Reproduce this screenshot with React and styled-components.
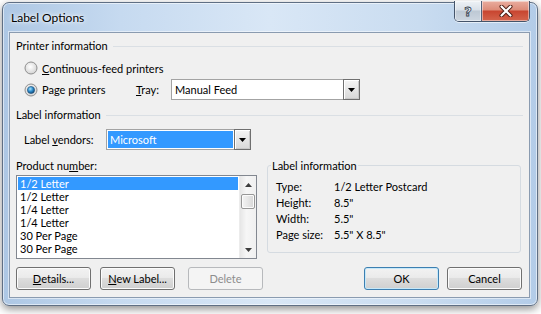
import React from 'react'
import styled, { createGlobalStyle, css } from 'styled-components'

const GlobalStyle = createGlobalStyle`
  html, body {
    margin: 0;
    padding: 0;
    background: #ffffff;
  }
  body {
    font-family: Lato, "Segoe UI", "Noto Sans", sans-serif;
    font-size: 11px;
    color: #000;
  }
  #root {
    width: 541px;
    height: 314px;
    overflow: hidden;
  }
`

const Window = styled.div`
  box-sizing: border-box;
  width: 536px;
  height: 304px;
  margin: 2px 0 0 2px;
  border: 1px solid #5f6f84;
  border-radius: 7px;
  background: linear-gradient(90deg, #adc7e4 0%, #c6daf0 22%, #d9e7f6 50%, #c9dcf0 78%, #b3cce8 100%);
  box-shadow: 0 3px 8px rgba(0, 0, 0, 0.45), inset 0 0 0 1px rgba(255, 255, 255, 0.55);
  padding: 0 7px 7px 6px;
  display: flex;
  flex-direction: column;
`

const TitleBar = styled.div`
  height: 29px;
  display: flex;
  align-items: flex-start;
`

const Title = styled.div`
  flex: 1;
  font-size: 12px;
  line-height: 29px;
  padding-left: 2px;
  text-shadow: 0 0 6px #fff, 0 0 3px #fff;
`

const CaptionButtons = styled.div`
  display: flex;
  margin-top: -2px;
  height: 20px;
  border: 1px solid #44546a;
  border-top: none;
  border-radius: 0 0 5px 5px;
  overflow: hidden;
  box-shadow: 0 1px 0 rgba(255, 255, 255, 0.6);
`

const CaptionButton = styled.div`
  width: ${p => p.$w}px;
  display: flex;
  align-items: center;
  justify-content: center;
  box-shadow: inset 0 0 0 1px rgba(255, 255, 255, 0.45);
  ${p => p.$close
    ? css`background: linear-gradient(#e9ad9f 0%, #dd8b78 45%, #c84530 50%, #d4654d 100%);`
    : css`
        background: linear-gradient(#eef2f6 0%, #d9e0e8 45%, #bdc8d4 50%, #cdd6e0 100%);
        border-right: 1px solid #52627a;
      `}
`

const HelpGlyph = styled.span`
  font-family: "DejaVu Sans", sans-serif;
  font-size: 13px;
  font-weight: bold;
  color: #f4f6f8;
  -webkit-text-stroke: 0.8px #2f3b4b;
  line-height: 1;
`

const Client = styled.div`
  flex: 1;
  box-sizing: border-box;
  background: #f0f0f0;
  border: 1px solid #8a9bb0;
  box-shadow: 0 0 0 1px rgba(255, 255, 255, 0.5);
  padding: 0 6px 0 6px;
  display: flex;
  flex-direction: column;
`

const SectionHeader = styled.div`
  display: flex;
  align-items: center;
  gap: 5px;
  height: 16px;
  line-height: 16px;
  margin-top: ${p => p.$top}px;
  &::after {
    content: '';
    flex: 1;
    height: 1px;
    background: #dadfe4;
  }
`

const Row = styled.div`
  display: flex;
  align-items: center;
  height: ${p => p.$h}px;
  margin-top: ${p => p.$top}px;
  padding-left: 8px;
`

const RadioLabel = styled.label`
  display: flex;
  align-items: center;
  gap: 4px;
  width: ${p => (p.$w ? `${p.$w}px` : 'auto')};
`

const FieldLabel = styled.span`
  width: ${p => p.$w}px;
  flex-shrink: 0;
`

const Key = styled.span`
  text-decoration: underline;
  text-underline-offset: 1px;
`

const Combo = styled.div`
  box-sizing: border-box;
  width: ${p => p.$w}px;
  height: 21px;
  display: flex;
  border: 1px solid #a3a3a3;
  background: #fff;
`

const ComboText = styled.div`
  flex: 1;
  margin: 1px;
  padding-left: 2px;
  line-height: 17px;
  ${p => p.$selected && css`
    background: #3399ff;
    color: #fff;
  `}
`

const ComboArrow = styled.div`
  box-sizing: border-box;
  width: 17px;
  margin: -1px -1px -1px 0;
  border: 1px solid #6f6f6f;
  box-shadow: inset 1px 1px 0 #ffffff, inset -1px -1px 0 #c8c8c8;
  background: linear-gradient(#f4f4f4, #d8d8d8);
  display: flex;
  align-items: center;
  justify-content: center;
`

const BottomArea = styled.div`
  display: grid;
  grid-template-columns: 241px 1fr;
  column-gap: 10px;
  margin-top: 8px;
  padding-right: 2px;
  align-items: start;
`

const ListLabel = styled.div`
  height: 15px;
  line-height: 15px;
`

const ListBox = styled.div`
  box-sizing: border-box;
  height: 84px;
  margin-top: 2px;
  border: 1px solid #828790;
  background: #fff;
  display: flex;
`

const Items = styled.div`
  flex: 1;
  padding: 1px 1px 0 1px;
  overflow: hidden;
`

const Item = styled.div`
  height: 13px;
  line-height: 13px;
  padding-left: 2px;
  white-space: nowrap;
  ${p => p.$selected && css`
    background: #3399ff;
    color: #fff;
  `}
`

const ScrollBar = styled.div`
  width: 16px;
  display: flex;
  flex-direction: column;
  background: linear-gradient(90deg, #e6e6e6, #f6f6f6 40%, #f0f0f0);
  border-left: 1px solid #ececec;
`

const ScrollArrow = styled.div`
  height: 17px;
  display: flex;
  align-items: center;
  justify-content: center;
`

const Track = styled.div`
  flex: 1;
  padding: 1px 1px 0 1px;
`

const Thumb = styled.div`
  box-sizing: border-box;
  height: 15px;
  border: 1px solid #979797;
  border-radius: 2px;
  background: linear-gradient(90deg, #f4f4f4, #e6e6e6 50%, #d6d6d6);
  box-shadow: inset 0 0 0 1px #fbfbfb;
`

const GroupBox = styled.fieldset`
  margin: 0;
  min-width: 0;
  border: 1px solid #d5dbe1;
  border-radius: 3px;
  padding: 5px 3px 10px 3px;
`

const Legend = styled.legend`
  padding: 0 1px;
  line-height: 15px;
`

const InfoGrid = styled.div`
  display: grid;
  grid-template-columns: 58px 1fr;
  grid-auto-rows: 16px;
  align-items: center;
  padding-left: 5px;
`

const ButtonRow = styled.div`
  display: flex;
  margin-top: 8px;
  padding-right: 1px;
`

const Button = styled.button`
  box-sizing: border-box;
  width: 75px;
  height: 23px;
  margin-left: ${p => p.$gap || 0}px;
  padding: 0;
  font: inherit;
  color: #000;
  border: 1px solid #707070;
  border-radius: 3px;
  background: linear-gradient(#f2f2f2 0%, #ebebeb 45%, #dddddd 50%, #cfcfcf 100%);
  box-shadow: inset 0 0 0 1px #fcfcfc;
  ${p => p.$default && css`
    border-color: #3c7fb1;
    box-shadow: inset 0 0 0 1px #c6e8f9;
  `}
  &:disabled {
    color: #8d8d8d;
    border-color: #b7b9bc;
    background: #f4f4f4;
    box-shadow: none;
  }
`

const Spacer = styled.div`
  flex: 1;
`

const Radio = ({ checked }) => (
  <svg width='14' height='14' viewBox='0 0 14 14'>
    <defs>
      <radialGradient id='rf' cx='45%' cy='40%' r='60%'>
        <stop offset='0%' stopColor='#ffffff' />
        <stop offset='100%' stopColor='#d3d3d3' />
      </radialGradient>
      <radialGradient id='rd' cx='40%' cy='35%' r='65%'>
        <stop offset='0%' stopColor='#a8e3fb' />
        <stop offset='55%' stopColor='#2d8bcb' />
        <stop offset='100%' stopColor='#144a78' />
      </radialGradient>
    </defs>
    <circle cx='7' cy='7' r='6' fill='url(#rf)' stroke='#8f8f8f' strokeWidth='1' />
    {checked && <circle cx='7' cy='7' r='3.6' fill='url(#rd)' stroke='#1d4f78' strokeWidth='0.6' />}
  </svg>
)

const DownTriangle = ({ color = '#000' }) => (
  <svg width='7' height='4' viewBox='0 0 7 4'>
    <path d='M0 0 H7 L3.5 4 Z' fill={color} />
  </svg>
)

const UpTriangle = ({ color = '#000' }) => (
  <svg width='7' height='4' viewBox='0 0 7 4'>
    <path d='M0 4 H7 L3.5 0 Z' fill={color} />
  </svg>
)

const CloseGlyph = () => (
  <svg width='14' height='12' viewBox='0 0 14 12'>
    <path d='M2.5 1.5 L11.5 10.5 M11.5 1.5 L2.5 10.5' stroke='#4a1c12' strokeWidth='4' strokeLinecap='round' />
    <path d='M2.5 1.5 L11.5 10.5 M11.5 1.5 L2.5 10.5' stroke='#ffffff' strokeWidth='2.2' strokeLinecap='round' />
  </svg>
)

const products = ['1/2 Letter', '1/2 Letter', '1/4 Letter', '1/4 Letter', '30 Per Page', '30 Per Page']

const info = [
  ['Type:', '1/2 Letter Postcard'],
  ['Height:', '8.5"'],
  ['Width:', '5.5"'],
  ['Page size:', '5.5" X 8.5"']
]

const App = () => {
  return (
    <>
      <GlobalStyle />
      <Window>
        <TitleBar>
          <Title>Label Options</Title>
          <CaptionButtons>
            <CaptionButton $w={26}><HelpGlyph>?</HelpGlyph></CaptionButton>
            <CaptionButton $w={47} $close><CloseGlyph /></CaptionButton>
          </CaptionButtons>
        </TitleBar>
        <Client>
          <SectionHeader $top={5}>Printer information</SectionHeader>
          <Row $h={18} $top={5}>
            <RadioLabel>
              <Radio />
              <span><Key>C</Key>ontinuous-feed printers</span>
            </RadioLabel>
          </Row>
          <Row $h={21} $top={2}>
            <RadioLabel $w={112}>
              <Radio checked />
              <span>Pa<Key>g</Key>e printers</span>
            </RadioLabel>
            <FieldLabel $w={35}><Key>T</Key>ray:</FieldLabel>
            <Combo $w={189}>
              <ComboText>Manual Feed</ComboText>
              <ComboArrow><DownTriangle /></ComboArrow>
            </Combo>
          </Row>
          <SectionHeader $top={7}>Label information</SectionHeader>
          <Row $h={21} $top={6}>
            <FieldLabel $w={82}>Label <Key>v</Key>endors:</FieldLabel>
            <Combo $w={145}>
              <ComboText $selected>Microsoft</ComboText>
              <ComboArrow><DownTriangle /></ComboArrow>
            </Combo>
          </Row>
          <BottomArea>
            <div>
              <ListLabel>Product nu<Key>m</Key>ber:</ListLabel>
              <ListBox>
                <Items>
                  {products.map((p, i) => (
                    <Item key={i} $selected={i === 0}>{p}</Item>
                  ))}
                </Items>
                <ScrollBar>
                  <ScrollArrow><UpTriangle color='#3d3d3d' /></ScrollArrow>
                  <Track><Thumb /></Track>
                  <ScrollArrow><DownTriangle color='#3d3d3d' /></ScrollArrow>
                </ScrollBar>
              </ListBox>
            </div>
            <GroupBox>
              <Legend>Label information</Legend>
              <InfoGrid>
                {info.map(([k, v]) => (
                  <React.Fragment key={k}>
                    <span>{k}</span>
                    <span>{v}</span>
                  </React.Fragment>
                ))}
              </InfoGrid>
            </GroupBox>
          </BottomArea>
          <ButtonRow>
            <Button><Key>D</Key>etails...</Button>
            <Button $gap={9}><Key>N</Key>ew Label...</Button>
            <Button $gap={13} disabled>Delete</Button>
            <Spacer />
            <Button $default>OK</Button>
            <Button $gap={8}>Cancel</Button>
          </ButtonRow>
        </Client>
      </Window>
    </>
  )
}

export default App
